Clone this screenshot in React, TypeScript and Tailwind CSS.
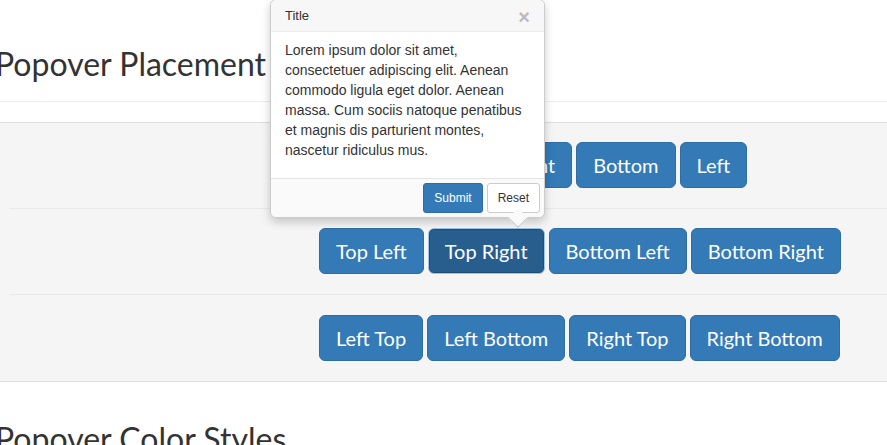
const rows = [
  ["Default", "Top", "Right", "Bottom", "Left"],
  ["Top Left", "Top Right", "Bottom Left", "Bottom Right"],
  ["Left Top", "Left Bottom", "Right Top", "Right Bottom"],
];

function Btn({ label, active }: { label: string; active?: boolean }) {
  return (
    <button
      className={
        active
          ? "h-[46px] px-4 rounded-[6px] text-[20px] leading-none text-white bg-[#285e8e] border border-[#9fc3ec] shadow-[inset_0_0_0_1px_#204d74]"
          : "h-[46px] px-4 rounded-[6px] text-[20px] leading-none text-white bg-[#337ab7] border border-[#2e6da4]"
      }
    >
      {label}
    </button>
  );
}

export default function App() {
  return (
    <div className="relative w-[887px] h-[445px] overflow-hidden bg-white font-['Lato',sans-serif] text-[#333]">
      {/* Header */}
      <div className="h-[102px] border-b border-[#eee]">
        <h2 className="pt-[44px] -ml-[5px] text-[32px] leading-[40px]">Popover Placement</h2>
      </div>
      <div className="h-[20px]" />

      {/* Demo band */}
      <div className="bg-[#f5f5f5] border-y border-[#dedede]">
        {rows.map((row, i) => (
          <div
            key={i}
            className={
              i < 2
                ? "ml-[10px] h-[86px] pt-[19px] border-b border-[#e9e9e9]"
                : "ml-[10px] h-[86px] pt-[20px]"
            }
          >
            <div className="ml-[309px] flex gap-[4px]">
              {row.map((b) => (
                <Btn key={b} label={b} active={b === "Top Right"} />
              ))}
            </div>
          </div>
        ))}
      </div>

      <h2 className="pt-[37px] -ml-[5px] text-[32px] leading-[40px]">Popover Color Styles</h2>

      {/* Popover */}
      <div className="absolute left-[270px] top-[-1px] w-[275px] bg-white border border-[#ccc] rounded-[6px] shadow-[0_4px_10px_rgba(0,0,0,0.2)] font-['Liberation_Sans',Arial,sans-serif]">
        <div className="h-[32px] flex items-center justify-between px-[14px] bg-[#f7f7f7] border-b border-[#ebebeb] rounded-t-[6px]">
          <span className="text-[13px] text-[#333]">Title</span>
          <span className="text-[20px] font-bold text-[#bbb] leading-none mt-[2px]">×</span>
        </div>
        <div className="px-[14px] pt-[8px] pb-[18px] text-[14px] leading-[20px] text-[#333]">
          Lorem ipsum dolor sit amet, consectetuer adipiscing elit. Aenean commodo ligula eget dolor. Aenean massa. Cum sociis natoque penatibus et magnis dis parturient montes, nascetur ridiculus mus.
        </div>
        <div className="flex justify-end gap-[4px] px-[4px] py-[4px] border-t border-[#e5e5e5] bg-[#fafafa] rounded-b-[6px]">
          <button className="h-[30px] px-[10px] rounded-[3px] text-[12px] text-white bg-[#337ab7] border border-[#2e6da4]">
            Submit
          </button>
          <button className="h-[30px] px-[10px] rounded-[3px] text-[12px] text-[#333] bg-white border border-[#ccc]">
            Reset
          </button>
        </div>
        <div className="absolute left-[240px] bottom-[-8px] w-[14px] h-[14px] rotate-45 bg-[#fafafa] border-r border-b border-[#ccc]" />
      </div>
    </div>
  );
}
